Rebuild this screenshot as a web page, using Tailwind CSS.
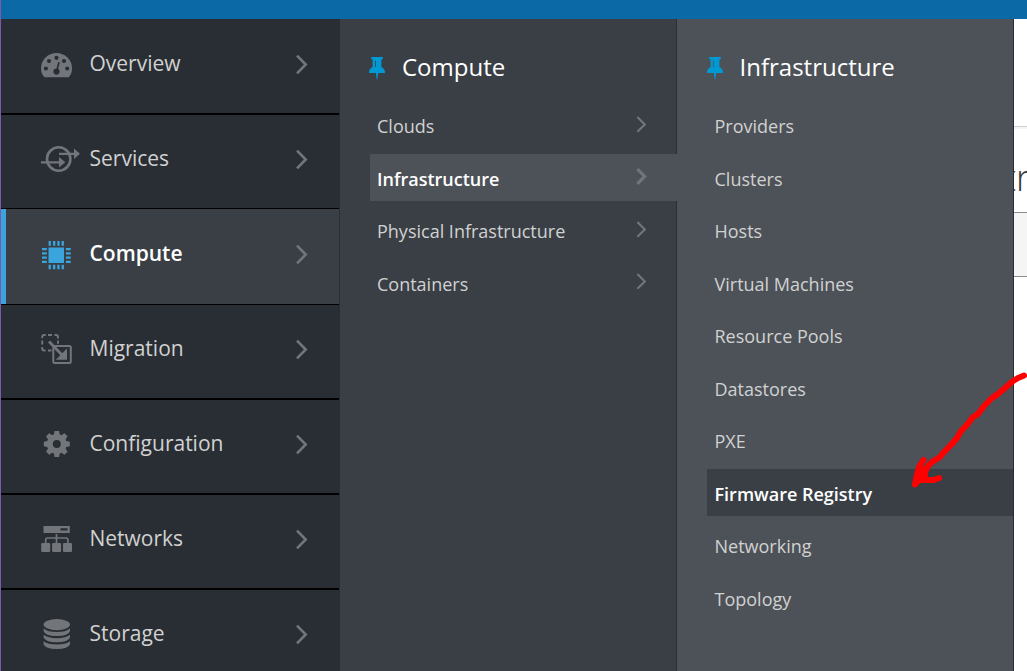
<!DOCTYPE html>
<html lang="en">
<head>
<meta charset="utf-8">
<title>Infrastructure</title>
<script src="https://cdn.jsdelivr.net/npm/@tailwindcss/browser@4"></script>
</head>
<body class="relative w-[1027px] h-[671px] overflow-hidden bg-white font-['Open_Sans',sans-serif]">
<svg class="hidden">
  <symbol id="chev" viewBox="0 0 16 24"><path d="M3 3.700 11.700 12.500 3 21.300" fill="none" stroke="currentColor" stroke-width="2.6"/></symbol>
  <symbol id="chev-sm" viewBox="0 0 14 20"><path d="M2.400 2 9.800 9.400 2.400 16.800" fill="none" stroke="currentColor" stroke-width="2.1"/></symbol>
  <symbol id="chev-bold" viewBox="0 0 14 20"><path d="M2.400 2 9.600 9.400 2.400 16.800" fill="none" stroke="currentColor" stroke-width="3.1"/></symbol>
  <symbol id="pin" viewBox="0 0 16 23"><path fill="currentColor" fill-rule="evenodd" d="M3 0h10q1 0 1 1t-1 1.500h-.6v7.500q3.300 1.600 3.600 5v.4q0 .6-.7.6H9.300L8.400 22q-.4.900-.8 0L7 16H.8q-.8 0-.8-.6 0-3.600 3.600-5.400V2.500H3Q2 2.200 2 1.200T3 0ZM6 3.500V10h.8V3.500Z"/></symbol>
</svg>
<div class="flex h-full border-l border-[#7b5aa9]">
 <div class="flex flex-col flex-1 min-w-0">
  <header class="h-[19px] shrink-0 bg-[#0b69a6]"></header>
  <div class="flex flex-1 min-h-0">

   <nav class="w-[339px] shrink-0 bg-[#292e34] pr-px text-[21px] leading-[30px] text-[#d1d1d1] overflow-hidden">
    <a class="flex h-[96px] border-b-2 border-black pl-[39px] pt-[25px]">
     <svg class="size-10 shrink-0 text-[#72767b]" viewBox="40 44 40 40"><path fill="currentColor" d="M44.500 77.200Q41 74 41 68.500a15.500 15.500 0 0 1 31 0q0 5.500-3.200 8.700Z"/><g fill="#292e34"><circle cx="56.500" cy="57.800" r="2.100"/><circle cx="49" cy="61" r="2.100"/><circle cx="64" cy="61" r="2.100"/><circle cx="45.900" cy="68.500" r="2.100"/><circle cx="67.200" cy="68.500" r="2.100"/><circle cx="56.500" cy="71.600" r="3.100"/></g><path d="M56.700 71 59 62.300" stroke="#292e34" stroke-width="1.700"/></svg>
     <span class="w-[204.5px] ml-[9.5px] pt-[4px]">Overview</span>
     <svg class="w-4 h-6 mt-[8px] text-[#72767b]"><use href="#chev"/></svg>
    </a>
    <a class="flex h-[94px] border-b border-black pl-[39px] pt-[24px]">
     <svg class="size-10 shrink-0 text-[#72767b]" viewBox="40 139 40 40"><g fill="none" stroke="currentColor" stroke-width="2.600"><circle cx="58.700" cy="159" r="11.700"/><path d="M59 153.800H74M41 162.300H60" stroke-width="2.200"/></g><path fill="currentColor" d="m74 148.500 6 5.300-6 5.300ZM59 157l6.300 5.300L59 167.500Z"/></svg>
     <span class="w-[204.5px] ml-[9.5px] pt-[4px]">Services</span>
     <svg class="w-4 h-6 mt-[8px] text-[#72767b]"><use href="#chev"/></svg>
    </a>
    <a class="flex h-[96px] border-b border-black bg-[#393f45] font-semibold text-white">
     <div class="w-[5px] h-full mr-[34px] bg-[#39a5dc]"></div>
     <svg class="size-10 mt-[25px] shrink-0 text-[#39a5dc]" viewBox="40 234 40 40"><path fill="currentColor" d="M48.500 247.500h15.500v15.500h-15.500ZM48.600 241h2.300v4.700h-2.300ZM53 241h2.300v4.700H53ZM57.300 241h2.300v4.700h-2.300ZM61.600 241h2.300v4.700h-2.300ZM48.600 264.700h2.300v4.500h-2.300ZM53 264.700h2.300v4.500H53ZM57.300 264.700h2.300v4.500h-2.300ZM61.600 264.700h2.300v4.500h-2.300ZM42 248h4.800v2.200H42ZM42 252.200h4.800v2.200H42ZM42 256.500h4.800v2.200H42ZM42 260.700h4.800v2.200H42ZM65.900 248h4.800v2.200h-4.800ZM65.900 252.200h4.800v2.200h-4.800ZM65.900 256.500h4.800v2.200h-4.800ZM65.900 260.700h4.800v2.200h-4.800Z"/></svg>
     <span class="w-[204.5px] ml-[9.5px] pt-[29px]">Compute</span>
     <svg class="w-4 h-6 mt-[33px] text-[#72767b]"><use href="#chev"/></svg>
    </a>
    <a class="flex h-[95px] border-b-2 border-black pl-[39px] pt-[24px]">
     <svg class="size-10 shrink-0 text-[#72767b]" viewBox="40 329 40 40"><g fill="none" stroke="currentColor" stroke-width="2"><path stroke-width="1.900" d="M42.200 338.200V337q0-2 2-2h1.500M48 335h4M54.500 335H56q2 0 2 2v1.500M58 340.500v3.300M42.200 340.500v4M42.200 347v1.500q0 2 2 2h1.300M48 350.500h3.500"/><rect x="53.300" y="346" width="17.500" height="17" rx="1.500"/><path stroke-width="2.800" d="M49 341.500 62 355"/></g><path fill="currentColor" d="M67 348.500v11.200H55.800Z"/></svg>
     <span class="w-[204.5px] ml-[9.5px] pt-[4px]">Migration</span>
     <svg class="w-4 h-6 mt-[8px] text-[#72767b]"><use href="#chev"/></svg>
    </a>
    <a class="flex h-[95px] border-b-2 border-black pl-[39px] pt-[24px]">
     <svg class="size-10 shrink-0 text-[#72767b]" viewBox="40 424 40 40"><g transform="translate(56.800 444)" fill="none" stroke="currentColor"><circle r="7" stroke-width="6"/><g fill="currentColor" stroke="none"><path id="tooth" d="M-3.200-8.500-2.200-13H2.200L3.200-8.500Z"/><use href="#tooth" transform="rotate(45)"/><use href="#tooth" transform="rotate(90)"/><use href="#tooth" transform="rotate(135)"/><use href="#tooth" transform="rotate(180)"/><use href="#tooth" transform="rotate(225)"/><use href="#tooth" transform="rotate(270)"/><use href="#tooth" transform="rotate(315)"/></g></g></svg>
     <span class="w-[204.5px] ml-[9.5px] pt-[4px]">Configuration</span>
     <svg class="w-4 h-6 mt-[8px] text-[#72767b]"><use href="#chev"/></svg>
    </a>
    <a class="flex h-[95px] border-b-2 border-black pl-[39px] pt-[24px]">
     <svg class="size-10 shrink-0 text-[#72767b]" viewBox="40 519 40 40"><path fill="currentColor" fill-rule="evenodd" d="M43.500 526h26.300v7H43.500ZM60.500 528.300v2.200h7v-2.200Z"/><path fill="none" stroke="currentColor" stroke-width="1.700" d="M56.500 534v9M45.700 543v-3q0-2 2-2h18.200q2 0 2 2v3"/><g fill="currentColor"><rect x="41.200" y="543" width="9" height="9" rx="1.200"/><rect x="52.100" y="543" width="9" height="9" rx="1.200"/><rect x="63" y="543" width="9" height="9" rx="1.200"/></g></svg>
     <span class="w-[204.5px] ml-[9.5px] pt-[4px]">Networks</span>
     <svg class="w-4 h-6 mt-[8px] text-[#72767b]"><use href="#chev"/></svg>
    </a>
    <a class="flex h-[95px] pl-[39px] pt-[24px]">
     <svg class="size-10 shrink-0 text-[#72767b]" viewBox="40 614 40 40"><g fill="currentColor"><ellipse cx="56.800" cy="624.600" rx="13.200" ry="5.600"/><path d="M43.600 628.500q4 3.600 13.200 3.600T70 628.500V631q-1.500 5-13.200 5T43.600 631ZM43.600 634.800q4 3.400 13.200 3.400T70 634.800v2.400q-1.500 5-13.200 5t-13.200-5ZM43.600 641.300q4 3.200 13.200 3.200T70 641.300v3q-1.500 4.700-13.200 4.700t-13.200-4.700Z"/></g></svg>
     <span class="w-[204.5px] ml-[9.5px] pt-[4px]">Storage</span>
     <svg class="w-4 h-6 mt-[8px] text-[#72767b]"><use href="#chev"/></svg>
    </a>
   </nav>

   <section class="w-[337px] shrink-0 bg-[#393f45] text-[18px] text-[#d1d1d1]">
    <div class="h-[82px] flex border-r border-[#292e34] pl-[29px] pt-[38px] text-white">
     <svg class="w-4 h-[23px] text-[#0099d3]"><use href="#pin"/></svg>
     <h2 class="ml-[17px] -mt-[7px] text-[24px] leading-[34px]">Compute</h2>
    </div>
    <div class="h-[53px] flex border-r border-[#292e34] pl-[37px] pt-[12px] leading-[26px]">
     <span class="w-[258px]">Clouds</span><svg class="w-[14px] h-5 mt-[2px] text-[#72767b]"><use href="#chev-sm"/></svg>
    </div>
    <div class="h-[47px] ml-[30px] bg-[#4d5258] flex pl-[7px] pt-[12px] leading-[26px] font-semibold text-white">
     <span class="w-[258px]">Infrastructure</span><svg class="w-[14px] h-5 mt-px text-[#72767b]"><use href="#chev-bold"/></svg>
    </div>
    <div class="h-[58px] flex border-r border-[#292e34] pl-[37px] pt-[17px] leading-[26px]">
     <span class="w-[258px]">Physical Infrastructure</span><svg class="w-[14px] h-5 mt-[2px] text-[#72767b]"><use href="#chev-sm"/></svg>
    </div>
    <div class="h-[412px] flex border-r border-[#292e34] pl-[37px] pt-[12px] leading-[26px]">
     <span class="w-[258px]">Containers</span><svg class="w-[14px] h-5 mt-px text-[#72767b]"><use href="#chev-sm"/></svg>
    </div>
   </section>

   <section class="w-[337px] shrink-0 bg-[#4d5258] border-r border-[#292e34] text-[18px] leading-[26px] text-[#d1d1d1]">
    <div class="h-[82px] flex pl-[29.5px] pt-[38px] text-white">
     <svg class="w-4 h-[23px] text-[#0099d3]"><use href="#pin"/></svg>
     <h2 class="ml-[17px] -mt-[7px] text-[24px] leading-[34px]">Infrastructure</h2>
    </div>
    <div class="h-[53px] pl-[37.5px] pt-[12px]">Providers</div>
    <div class="h-[52px] pl-[37.5px] pt-[12px]">Clusters</div>
    <div class="h-[53px] pl-[37.5px] pt-[12px]">Hosts</div>
    <div class="h-[52px] pl-[37.5px] pt-[12px]">Virtual Machines</div>
    <div class="h-[53px] pl-[37.5px] pt-[12px]">Resource Pools</div>
    <div class="h-[52px] pl-[37.5px] pt-[12px]">Datastores</div>
    <div class="h-[53px] pl-[37.5px] pt-[12px]">PXE</div>
    <div class="h-[47px] ml-[30px] pl-[7.5px] pt-[12px] bg-[#393f45] font-semibold text-white">Firmware Registry</div>
    <div class="h-[58px] pl-[37.5px] pt-[17px]">Networking</div>
    <div class="h-[52px] pl-[37.5px] pt-[12px]">Topology</div>
   </section>

   <main class="flex-1 min-w-0 overflow-hidden">
    <div class="h-[107px] border-b border-[#d1d1d1] box-content"></div>
    <div class="h-[2px] bg-[#f5f5f5]"></div>
    <div class="h-[83px] pt-[24px] overflow-hidden"><h1 class="-ml-[10px] text-[36px] leading-[50px] font-light text-[#363636] whitespace-nowrap">tr</h1></div>
    <div class="h-[65px] bg-[#f5f5f5] border-y border-[#8b8d8f]"></div>
   </main>
  </div>
 </div>
</div>
<svg class="absolute inset-0 pointer-events-none" width="1027" height="671" viewBox="0 0 1027 671"><g fill="none" stroke="#f00" stroke-width="6" stroke-linecap="round" stroke-linejoin="round"><path d="M1024 375.500 1018 378 1013 381 1005 388 998 394 992 398 984 406 978 414 973 417 966 426 961 431 957 438 950 446 944 452 940 457 932 462 928 466 924 474 917 482"/><path d="M923.500 460 919 467 916.500 477 915 484.500 920 477 925 469M916 480H934L939 478M917 482 925 475"/></g></svg>
</body>
</html>
